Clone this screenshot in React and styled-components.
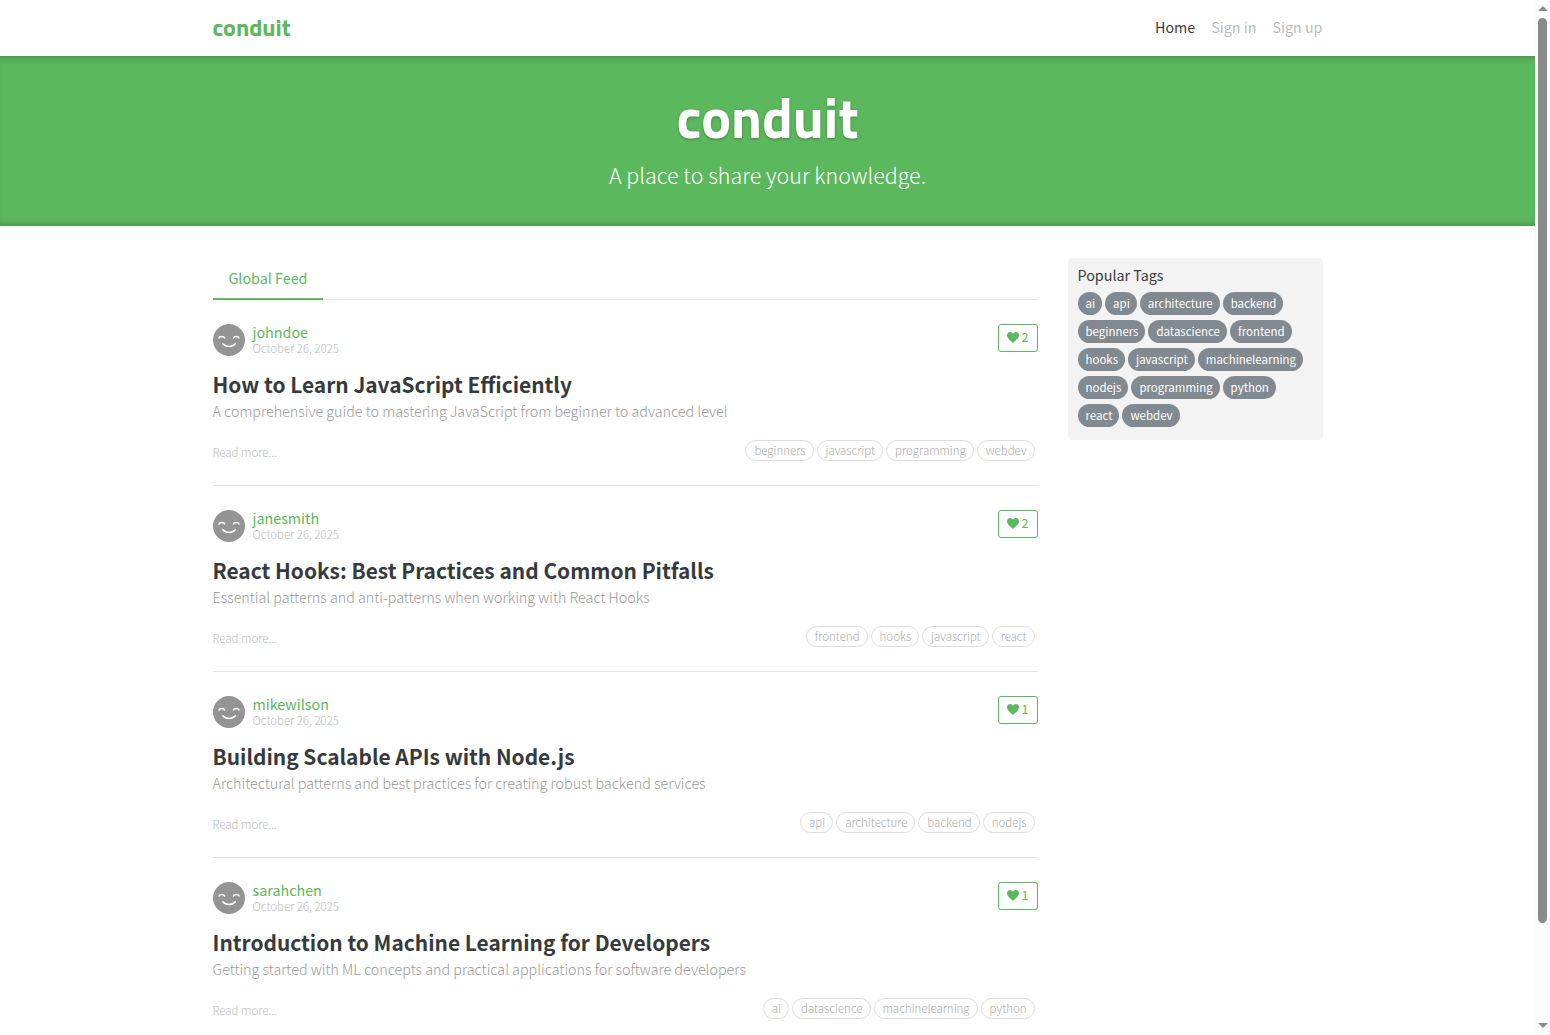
import React from "react";
import styled, { createGlobalStyle } from "styled-components";

const GlobalStyle = createGlobalStyle`
  *, *::before, *::after { box-sizing: border-box; }
  html { font-size: 16px; }
  body {
    margin: 0;
    background: #fff;
    color: #373a3c;
    font-family: "Source Sans Pro", "Noto Sans CJK SC", sans-serif;
    font-size: 16px;
    font-size-adjust: 0.486;
    line-height: 24px;
  }
  a { color: inherit; text-decoration: none; }
  h1, h2, p, ul { margin: 0; padding: 0; }
  ul { list-style: none; }
`;

const Shell = styled.div`
  display: grid;
  grid-template-columns: minmax(0, 1fr) 15px;
  height: 100vh;
`;

const Page = styled.div`
  overflow: hidden;
`;

const Track = styled.div`
  display: flex;
  flex-direction: column;
  align-items: center;
  gap: 7px;
  padding: 6px 0 7px;
  background: #fcfcfc;
`;

const Arrow = styled.span`
  flex: none;
  border: solid transparent;
  border-width: ${(p) => (p.$down ? "5px 5px 0" : "0 5px 5px")};
  border-top-color: ${(p) => (p.$down ? "#8b8b8b" : "transparent")};
  border-bottom-color: ${(p) => (p.$down ? "transparent" : "#8b8b8b")};
`;

const Rail = styled.div`
  flex: 1;
  width: 9px;
`;

const Thumb = styled.div`
  height: 90.7%;
  border-radius: 5px;
  background: #8b8b8b;
`;

const Container = styled.div`
  max-width: 1140px;
  margin: 0 auto;
  padding: 0 15px;
`;

const Bar = styled(Container)`
  display: flex;
  justify-content: space-between;
  align-items: center;
  height: 56px;
  padding-bottom: 2px;
`;

const Brand = styled.a`
  color: #5cb85c;
  font-family: "Titillium Web", Roboto, sans-serif;
  font-size: 24px;
  font-weight: 700;
  font-size-adjust: 0.5;
`;

const NavLinks = styled.ul`
  display: flex;
  gap: 16px;
`;

const NavLink = styled.a`
  color: ${(p) => (p.$active ? "rgba(0, 0, 0, 0.8)" : "rgba(0, 0, 0, 0.3)")};
`;

const Banner = styled.header`
  padding: 31px 32px 33px;
  margin-bottom: 32px;
  background: #5cb85c;
  color: #fff;
  text-align: center;
  box-shadow: inset 0 8px 8px -8px rgba(0, 0, 0, 0.3),
    inset 0 -8px 8px -8px rgba(0, 0, 0, 0.3);
`;

const BannerTitle = styled.h1`
  padding-bottom: 8px;
  font-family: "Titillium Web", Roboto, sans-serif;
  font-size: 56px;
  font-weight: 700;
  font-size-adjust: 0.5;
  line-height: 62px;
  text-shadow: 0 1px 3px rgba(0, 0, 0, 0.3);
`;

const BannerText = styled.p`
  font-size: 24px;
  font-weight: 300;
  line-height: 36px;
`;

const Columns = styled(Container)`
  display: grid;
  grid-template-columns: minmax(0, 1fr) minmax(0, 255px);
  gap: 30px;
  align-items: start;
`;

const Tabs = styled.div`
  display: flex;
  box-shadow: inset 0 -1px #e5e5e5;
`;

const Tab = styled.button`
  padding: 8px 16px;
  border: 0;
  border-bottom: 2px solid #5cb85c;
  background: transparent;
  color: #5cb85c;
  font: inherit;
  font-size-adjust: 0.486;
`;

const Preview = styled.article`
  padding: 24px 0 21px;
  border-bottom: 1px solid #e5e5e5;
`;

const Meta = styled.div`
  display: flex;
  align-items: flex-start;
  gap: 8px;
  margin-bottom: 15px;
`;

const Avatar = styled.svg`
  display: block;
  width: 32px;
  height: 32px;
`;

const Info = styled.div`
  display: flex;
  flex: 1;
  flex-direction: column;
`;

const Author = styled.a`
  color: #5cb85c;
  line-height: 16px;
`;

const PostDate = styled.time`
  color: #bbb;
  font-size: 13px;
  font-size-adjust: 0.479;
  font-weight: 300;
  line-height: 16px;
`;

const LikeButton = styled.button`
  display: flex;
  align-items: center;
  gap: 3px;
  height: 28px;
  padding: 0 8px 2px;
  border: 1px solid #5cb85c;
  border-radius: 3px;
  background: #fff;
  color: #5cb85c;
  font: inherit;
  font-size: 14px;
  font-size-adjust: 0.486;
`;

const HeartIcon = styled.svg`
  width: 12px;
  height: 11px;
  fill: currentColor;
`;

const Title = styled.h2`
  margin-bottom: 2px;
  font-size: 24px;
  font-size-adjust: 0.473;
  font-weight: 600;
  line-height: 26px;
`;

const Description = styled.p`
  margin-bottom: 17px;
  color: #999;
  font-weight: 300;
`;

const Footer = styled.div`
  display: flex;
  justify-content: space-between;
  align-items: flex-start;
`;

const ReadMore = styled.a`
  color: #bbb;
  font-size: 13px;
  font-size-adjust: 0.479;
  font-weight: 300;
`;

const TagList = styled.ul`
  display: flex;
  flex-wrap: wrap;
  gap: 3px;
  padding-right: 3px;
`;

const Tag = styled.li`
  padding: 0 7px 0 8px;
  border: 1px solid #ddd;
  border-radius: 11px;
  color: #aaa;
  font-size: 13px;
  font-size-adjust: 0.479;
  font-weight: 300;
  line-height: 19px;
`;

const Sidebar = styled.aside`
  padding: 5px 10px 13px;
  border-radius: 4px;
  background: #f3f3f3;
`;

const SidebarTitle = styled.p`
  margin-bottom: 5px;
`;

const PopularTags = styled.div`
  display: flex;
  flex-wrap: wrap;
  gap: 5px 3px;
`;

const PopularTag = styled.a`
  padding: 0 7px 0 8px;
  border-radius: 12px;
  background: #818a91;
  color: #fff;
  font-size: 13px;
  font-size-adjust: 0.479;
  line-height: 23px;
`;

const articles = [
  {
    author: "johndoe",
    likes: 2,
    title: "How to Learn JavaScript Efficiently",
    text: "A comprehensive guide to mastering JavaScript from beginner to advanced level",
    tags: ["beginners", "javascript", "programming", "webdev"],
  },
  {
    author: "janesmith",
    likes: 2,
    title: "React Hooks: Best Practices and Common Pitfalls",
    text: "Essential patterns and anti-patterns when working with React Hooks",
    tags: ["frontend", "hooks", "javascript", "react"],
  },
  {
    author: "mikewilson",
    likes: 1,
    title: "Building Scalable APIs with Node.js",
    text: "Architectural patterns and best practices for creating robust backend services",
    tags: ["api", "architecture", "backend", "nodejs"],
  },
  {
    author: "sarahchen",
    likes: 1,
    title: "Introduction to Machine Learning for Developers",
    text: "Getting started with ML concepts and practical applications for software developers",
    tags: ["ai", "datascience", "machinelearning", "python"],
  },
];

const popularTags = [
  "ai", "api", "architecture", "backend", "beginners", "datascience",
  "frontend", "hooks", "javascript", "machinelearning", "nodejs",
  "programming", "python", "react", "webdev",
];

function Smiley() {
  return (
    <Avatar viewBox="0 0 32 32" aria-hidden="true">
      <circle cx="16" cy="16" r="16" fill="#949494" />
      <g fill="none" stroke="#fff" strokeWidth="1.5" strokeLinecap="round">
        <path d="M6 14c.6-2 4.800-2 5.600 0" />
        <path d="M20.400 14c.8-2 5-2 5.600 0" />
        <path d="M9.800 19.700c3 3.700 9.600 3.700 12.600 0" />
      </g>
    </Avatar>
  );
}

function Article({ author, likes, title, text, tags }) {
  return (
    <Preview>
      <Meta>
        <Smiley />
        <Info>
          <Author href="#">{author}</Author>
          <PostDate dateTime="2025-10-26">October 26, 2025</PostDate>
        </Info>
        <LikeButton type="button">
          <HeartIcon viewBox="0 0 24 22" aria-hidden="true">
            <path d="M12 22C10.500 19.500 0 13.500 0 6.500 0 2.500 2.800 0 6.200 0 9.300 0 11 2 12 4.200 13 2 14.700 0 17.800 0 21.200 0 24 2.500 24 6.500 24 13.500 13.500 19.500 12 22z" />
          </HeartIcon>
          {likes}
        </LikeButton>
      </Meta>
      <Title>{title}</Title>
      <Description>{text}</Description>
      <Footer>
        <ReadMore href="#">Read more...</ReadMore>
        <TagList>
          {tags.map((tag) => (
            <Tag key={tag}>{tag}</Tag>
          ))}
        </TagList>
      </Footer>
    </Preview>
  );
}

export default function App() {
  return (
    <>
      <GlobalStyle />
      <Shell>
        <Page>
          <Bar as="nav">
            <Brand href="#">conduit</Brand>
            <NavLinks>
              <li><NavLink href="#" $active>Home</NavLink></li>
              <li><NavLink href="#">Sign in</NavLink></li>
              <li><NavLink href="#">Sign up</NavLink></li>
            </NavLinks>
          </Bar>
          <Banner>
            <BannerTitle>conduit</BannerTitle>
            <BannerText>A place to share your knowledge.</BannerText>
          </Banner>
          <Columns as="main">
            <section>
              <Tabs>
                <Tab type="button">Global Feed</Tab>
              </Tabs>
              {articles.map((article) => (
                <Article key={article.author} {...article} />
              ))}
            </section>
            <Sidebar>
              <SidebarTitle>Popular Tags</SidebarTitle>
              <PopularTags>
                {popularTags.map((tag) => (
                  <PopularTag key={tag} href="#">{tag}</PopularTag>
                ))}
              </PopularTags>
            </Sidebar>
          </Columns>
        </Page>
        <Track aria-hidden="true">
          <Arrow />
          <Rail>
            <Thumb />
          </Rail>
          <Arrow $down />
        </Track>
      </Shell>
    </>
  );
}
